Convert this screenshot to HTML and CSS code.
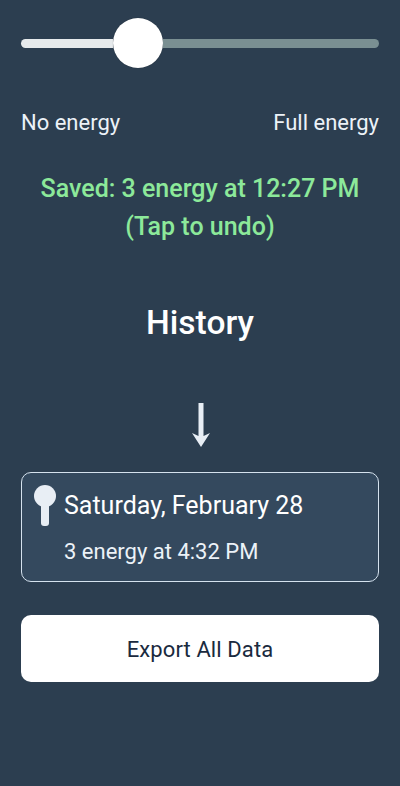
FILE: index.html
```html
<!DOCTYPE html>
<html lang="en">
<head>
  <meta charset="UTF-8">
  <meta name="viewport" content="width=device-width, initial-scale=1.0">
  <title>Energy Tracker</title>
  <link rel="stylesheet" href="styles.css">
</head>
<body>
  <div class="main-container">
    <!-- Slider -->
    <div class="slider">
      <div class="track-filled"></div>
      <div class="track-rest"></div>
      <div class="thumb"></div>
    </div>
    <div class="slider-labels">
      <span>No energy</span>
      <span>Full energy</span>
    </div>

    <p class="saved">Saved: 3 energy at 12:27 PM<br>(Tap to undo)</p>

    <!-- History -->
    <h1>History</h1>
    <svg class="arrow" width="20" height="46" viewBox="0 0 20 46">
      <path d="M7.5 1h5v33l6.5-3L10 45 1 31l6.5 3z" fill="#e8eef5"/>
    </svg>

    <div class="history-card">
      <svg class="pin" width="22" height="42" viewBox="0 0 22 42">
        <circle cx="11" cy="11" r="11" fill="#e8eef5"/>
        <rect x="7" y="14" width="8" height="27" rx="3" fill="#e8eef5"/>
      </svg>
      <div class="history-text">
        <div class="history-date">Saturday, February 28</div>
        <div class="history-entry">3 energy at 4:32 PM</div>
      </div>
    </div>

    <button class="export-btn">Export All Data</button>
  </div>
</body>
</html>
```

FILE: styles.css
```css
/* General Styles */
body {
  margin: 0;
  font-family: Roboto, sans-serif;
  background: #2c3e50;
  color: white;
  overflow: hidden;
}

.main-container {
  height: 786px;
  padding: 0 21px;
  box-sizing: border-box;
  display: flex;
  flex-direction: column;
}

/* Slider */
.slider {
  display: flex;
  align-items: center;
  height: 52px;
  margin-top: 17px;
}

.track-filled {
  width: 92px;
  height: 9px;
  background: #e6eaec;
  border-radius: 5px 0 0 5px;
}

.thumb {
  order: 1;
  width: 50px;
  height: 50px;
  flex: none;
  background: white;
  border-radius: 50%;
  box-shadow: 0 0 1px rgba(0, 0, 0, 0.4);
}

.track-rest {
  order: 2;
  flex: 1;
  height: 9px;
  background: #7a8f92;
  border-radius: 0 5px 5px 0;
}

.slider-labels {
  display: flex;
  justify-content: space-between;
  margin-top: 39px;
  font-size: 22px;
  line-height: 30px;
  color: #ecf2f8;
}

.saved {
  margin: 32px 0 0;
  text-align: center;
  font-size: 25px;
  font-weight: 500;
  line-height: 38px;
  color: #8ce99a;
}

h1 {
  margin: 53px 0 0;
  text-align: center;
  font-size: 33.5px;
  font-weight: 500;
  line-height: 48px;
  color: white;
}

.arrow {
  align-self: center;
  margin: 55px 0 0 2px;
}

/* History card */
.history-card {
  display: flex;
  margin-top: 24px;
  height: 110px;
  box-sizing: border-box;
  padding: 12px;
  gap: 8px;
  background: #34495e;
  border: 1px solid #d5e2ee;
  border-radius: 10px;
}

.history-date {
  font-size: 25px;
  line-height: 42px;
}

.history-entry {
  margin-top: 10px;
  font-size: 22px;
  line-height: 30px;
  color: #ecf2f8;
}

.export-btn {
  margin-top: 33px;
  height: 67px;
  padding-top: 3px;
  background: white;
  color: #1a2a3e;
  border: none;
  border-radius: 10px;
  font-family: inherit;
  font-size: 22px;
  letter-spacing: 0.1px;
}
```
